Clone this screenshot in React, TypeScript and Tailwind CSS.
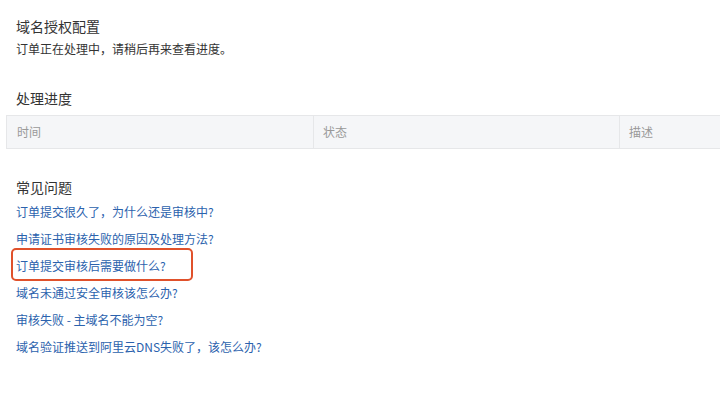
import { FC } from "react";

const faqs = [
  "订单提交很久了，为什么还是审核中?",
  "申请证书审核失败的原因及处理方法?",
  "订单提交审核后需要做什么?",
  "域名未通过安全审核该怎么办?",
  "审核失败 - 主域名不能为空?",
  "域名验证推送到阿里云DNS失败了，该怎么办?",
];

const font = {
  fontFamily: '"Noto Sans CJK SC", "Noto Sans", sans-serif',
};

const App: FC = () => {
  return (
    <div
      className="w-[720px] h-[409px] overflow-hidden bg-white pl-[6px] pt-[16px] text-[#333]"
      style={font}
    >
      <div className="pl-[10px]">
        <h2 className="text-[14px] leading-[20px] font-normal text-[#333]">
          域名授权配置
        </h2>
        <p className="mt-[4px] text-[12px] leading-[18px] text-[#333]">
          订单正在处理中，请稍后再来查看进度。
        </p>
        <h2 className="mt-[30px] text-[14px] leading-[20px] font-normal text-[#333]">
          处理进度
        </h2>
      </div>

      <div className="mt-[7px] flex h-[34px] border-y border-l border-[#e6e7e9] bg-[#f5f6f8] text-[12px] text-[#999]">
        <div className="flex w-[306px] items-center pl-[10px]">时间</div>
        <div className="flex w-[306px] items-center border-l border-[#e6e7e9] pl-[9px]">
          状态
        </div>
        <div className="flex flex-1 items-center border-l border-[#e6e7e9] pl-[9px]">
          描述
        </div>
      </div>

      <div className="pl-[10px]">
        <h2 className="mt-[28px] text-[14px] leading-[20px] font-normal text-[#333]">
          常见问题
        </h2>
        <ul className="mt-[6px] flex flex-col gap-[9px]">
          {faqs.map((q, i) => (
            <li key={i} className="relative text-[12px] leading-[18px]">
              <a className="text-[#2b62ad]">{q}</a>
              {i === 2 && (
                <span className="absolute left-[-5px] top-[-9px] h-[33px] w-[182px] rounded-[5px] border-2 border-[#e0512b]" />
              )}
            </li>
          ))}
        </ul>
      </div>
    </div>
  );
};

export default App;
